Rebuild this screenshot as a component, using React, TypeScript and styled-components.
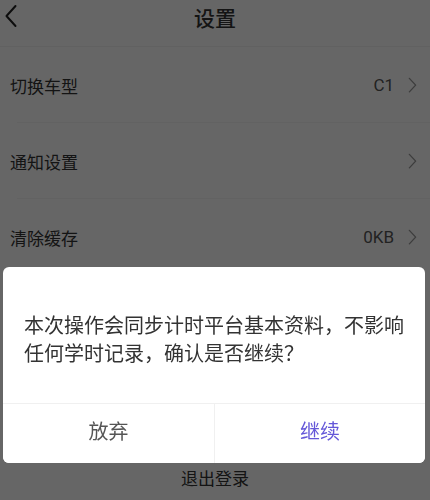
import styled, { createGlobalStyle } from "styled-components";

const GlobalStyle = createGlobalStyle`
  body {
    margin: 0;
    background: #fff;
    font-family: "Noto Sans CJK SC", "Noto Sans", sans-serif;
  }
`;

const Page = styled.div`
  width: 430px;
  height: 500px;
  overflow: hidden;
  background: #fff;
`;

const Header = styled.header`
  position: relative;
  height: 47px;
  display: flex;
  justify-content: center;
  border-bottom: 1px solid #f3f3f3;
  box-sizing: border-box;
`;

const BackButton = styled.button`
  position: absolute;
  left: 4px;
  top: 4px;
  padding: 0;
  border: none;
  background: none;
  display: flex;
`;

const Title = styled.h1`
  margin: 0;
  font-size: 21px;
  font-weight: 500;
  line-height: 34px;
  color: #333;
`;

const List = styled.ul`
  margin: 0;
  padding: 0;
  list-style: none;
`;

const Row = styled.li`
  height: 76px;
  display: flex;
  align-items: center;
  padding: 0 13px 0 10px;
  box-sizing: border-box;
  position: relative;

  &:not(:last-child)::after {
    content: "";
    position: absolute;
    left: 17px;
    right: 0;
    bottom: 0;
    border-bottom: 1px solid #f6f6f6;
  }
`;

const Label = styled.span`
  flex: 1;
  font-size: 17px;
  color: #333;
`;

const Value = styled.span`
  font-size: 17px;
  color: #555;
  font-family: "Roboto", "Noto Sans CJK SC", sans-serif;
  margin-right: 14px;
`;

const Logout = styled.button`
  display: block;
  width: 100%;
  height: 56px;
  margin-top: 174px;
  border: none;
  background: #fff;
  font-family: inherit;
  font-size: 17px;
  color: #333;
`;

const Overlay = styled.div`
  position: fixed;
  inset: 0;
  background: rgba(0, 0, 0, 0.6);
`;

const Dialog = styled.div`
  position: fixed;
  left: 3px;
  top: 267px;
  width: 422px;
  background: #fff;
  border-radius: 6px;
  overflow: hidden;
`;

const Message = styled.p`
  margin: 0;
  padding: 44px 20px 36px 21px;
  font-size: 20px;
  line-height: 28px;
  color: #333;
  border-bottom: 1px solid #f0f0f0;
`;

const Actions = styled.div`
  display: grid;
  grid-template-columns: 1fr 1fr;
  height: 59px;
`;

const ActionButton = styled.button<{ $primary?: boolean }>`
  border: none;
  background: #fff;
  font-family: inherit;
  font-size: 20px;
  color: ${(p) => (p.$primary ? "#6457d8" : "#555")};
  padding: 0 0 6px;

  & + & {
    border-left: 1px solid #f0f0f0;
  }
`;

function Chevron({ size = 9, color = "#999" }: { size?: number; color?: string }) {
  return (
    <svg width={size} height={size * 1.8} viewBox="0 0 10 18" fill="none">
      <path d="M1.5 1.5 L8.5 9 L1.5 16.5" stroke={color} strokeWidth="1.5" strokeLinecap="round" strokeLinejoin="round" />
    </svg>
  );
}

const settings = [
  { label: "切换车型", value: "C1" },
  { label: "通知设置", value: "" },
  { label: "清除缓存", value: "0KB" },
];

export default function App() {
  return (
    <>
      <GlobalStyle />
      <Page>
        <Header>
          <BackButton>
            <svg width="14" height="24" viewBox="0 0 14 24" fill="none">
              <path d="M11.5 2 L2.5 12 L11.5 22" stroke="#222" strokeWidth="2" strokeLinecap="round" strokeLinejoin="round" />
            </svg>
          </BackButton>
          <Title>设置</Title>
        </Header>
        <List>
          {settings.map((item) => (
            <Row key={item.label}>
              <Label>{item.label}</Label>
              {item.value && <Value>{item.value}</Value>}
              <Chevron />
            </Row>
          ))}
        </List>
        <Logout>退出登录</Logout>
      </Page>
      <Overlay />
      <Dialog>
        <Message>本次操作会同步计时平台基本资料，不影响任何学时记录，确认是否继续？</Message>
        <Actions>
          <ActionButton>放弃</ActionButton>
          <ActionButton $primary>继续</ActionButton>
        </Actions>
      </Dialog>
    </>
  );
}
